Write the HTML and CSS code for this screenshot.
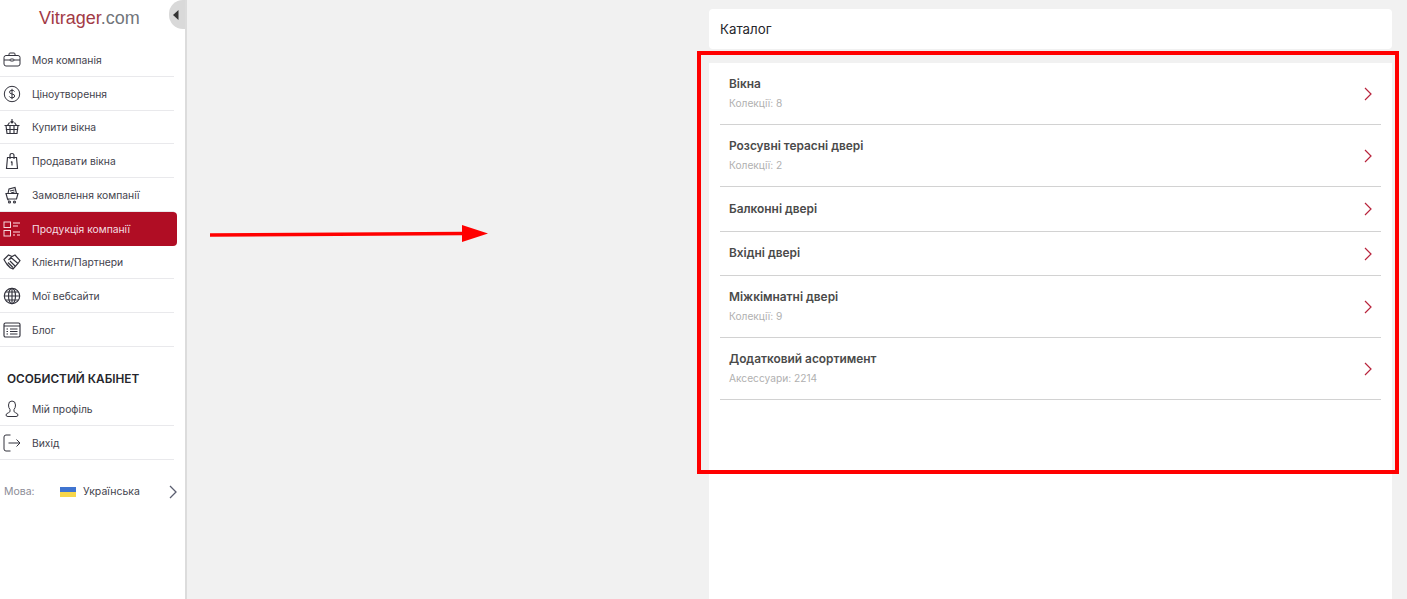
FILE: index.html
```html
<!DOCTYPE html>
<html lang="uk">
<head>
<meta charset="utf-8">
<title>Каталог</title>
<link rel="stylesheet" href="styles.css">
</head>
<body>
<div class="page">
  <aside class="sidebar">
    <div class="logo"><span class="logo-red">Vitrager</span>.com</div>
    <button class="collapse" aria-label="collapse"><svg width="6" height="10" viewBox="0 0 6 10"><path d="M5.5 0v10L0 5z" fill="#333"/></svg></button>
    <nav class="menu">
      <a class="item"><svg class="ico" viewBox="0 0 18 18"><rect x="1" y="4.500" width="16" height="10.500" rx="2"/><path d="M6 4.500V3q0-1 1-1h4q1 0 1 1v1.500M1 9h6M11 9h6"/><rect x="7" y="8" width="4" height="2" rx="1"/></svg><span>Моя компанія</span></a>
      <a class="item"><svg class="ico" viewBox="0 0 18 18"><circle cx="9" cy="9" r="7.700"/><path d="M11.500 6.500Q11 5.300 9 5.300 6.500 5.300 6.500 7.100 6.500 8.600 9 9q2.700.4 2.700 2 0 1.800-2.700 1.800-2.200 0-2.700-1.400M9 3.800v10.400"/></svg><span>Ціноутворення</span></a>
      <a class="item"><svg class="ico heavy" viewBox="0 0 18 18"><path d="M1.500 7.500h15M3 7.500l1 8h10l1-8M2.800 11.500h12.400M7 7.500v8M11 7.500v8M9 1v4M7.500 3.500 9 5l1.500-1.500M4.500 7.500 6.500 4.500M13.500 7.500l-2-3"/></svg><span>Купити вікна</span></a>
      <a class="item"><svg class="ico heavy" viewBox="0 0 18 18"><path d="M4.500 5.500h9l1 11H3.500zM7 7V3.500q0-2 2-2t2 2V7M9 9.500v4M8 10.500l1-1"/></svg><span>Продавати вікна</span></a>
      <a class="item"><svg class="ico heavy" viewBox="0 0 18 18"><path d="M3 7.500h12L13.500 13h-9zM4.500 13l1 1.500M5 7.500 6 3l6-1.500 1.500 6M7 5l4.500-1M8 7l3.500-1"/><circle cx="6.500" cy="16" r="1"/><circle cx="11.500" cy="16" r="1"/></svg><span>Замовлення компанії</span></a>
      <a class="item active"><svg class="ico" viewBox="0 0 18 18"><rect x="1" y="2" width="6.500" height="5.500"/><rect x="1" y="10.500" width="6.500" height="5.500"/><path class="thick" d="M10 3h7M10 6h5M10 12h7M10 15h2M14 15h3"/></svg><span>Продукція компанії</span></a>
      <a class="item"><svg class="ico heavy" viewBox="0 0 18 18"><path d="M1 6.500 5.500 2 9 3.500 12 2l5 5.500-2 3-5 5.500-2-1-1-.5-4-4.500zM5.500 7 9 3.500M7 6l1.500-1 6.500 5.500M5 9.500l5 5M3.500 11l4 4M7 8l5 5"/></svg><span>Клієнти/Партнери</span></a>
      <a class="item"><svg class="ico heavy" viewBox="0 0 18 18"><circle cx="9" cy="9" r="7.700"/><ellipse cx="9" cy="9" rx="3.500" ry="7.700"/><path d="M9 1.300v15.400M1.300 9h15.400M2.500 5h13M2.500 13h13"/></svg><span>Мої вебсайти</span></a>
      <a class="item"><svg class="ico heavy" viewBox="0 0 18 18"><rect x="1" y="2" width="16" height="14" rx="1.500"/><path d="M1 5h16M3.500 8H5M3.500 10.500H5M3.500 13H5M7 8h7.500M7 10.500h7.500M7 13h7.500"/></svg><span>Блог</span></a>
    </nav>
    <h2 class="section">ОСОБИСТИЙ КАБІНЕТ</h2>
    <nav class="menu">
      <a class="item"><svg class="ico" viewBox="0 0 18 18"><path d="M9 1q3.500 0 3.500 4 0 3-1.500 4.500v1.700q0 1 1.500 1.500 2.500 1 2.500 2.300 0 1.500-2 1.500H5q-2 0-2-1.500 0-1.300 2.500-2.300Q7 12.200 7 11.200V9.500Q5.500 8 5.500 5q0-4 3.500-4z"/></svg><span>Мій профіль</span></a>
      <a class="item"><svg class="ico" viewBox="0 0 18 18"><path d="M7.500 1H3Q1 1 1 3v12q0 2 2 2h4.500M5.500 9h11.500M13.500 5.500 17 9l-3.500 3.500"/></svg><span>Вихід</span></a>
    </nav>
    <div class="lang">
      <span class="lang-label">Мова:</span>
      <span class="flag"></span>
      <span class="lang-name">Українська</span>
      <svg class="lang-arrow" width="8" height="14" viewBox="0 0 8 14"><path d="M1 1l6 6-6 6"/></svg>
    </div>
  </aside>
  <main class="main">
    <section class="panel">
      <header class="panel-head">Каталог</header>
      <div class="catalog">
        <a class="row"><div class="row-text"><div class="row-title">Вікна</div><div class="row-sub">Колекції: 8</div></div><svg class="chev" viewBox="0 0 8 14"><path d="M1 1l6 6-6 6"/></svg></a>
        <a class="row"><div class="row-text"><div class="row-title">Розсувні терасні двері</div><div class="row-sub">Колекції: 2</div></div><svg class="chev" viewBox="0 0 8 14"><path d="M1 1l6 6-6 6"/></svg></a>
        <a class="row short"><div class="row-text"><div class="row-title">Балконні двері</div></div><svg class="chev" viewBox="0 0 8 14"><path d="M1 1l6 6-6 6"/></svg></a>
        <a class="row short tight"><div class="row-text"><div class="row-title">Вхідні двері</div></div><svg class="chev" viewBox="0 0 8 14"><path d="M1 1l6 6-6 6"/></svg></a>
        <a class="row"><div class="row-text"><div class="row-title">Міжкімнатні двері</div><div class="row-sub">Колекції: 9</div></div><svg class="chev" viewBox="0 0 8 14"><path d="M1 1l6 6-6 6"/></svg></a>
        <a class="row"><div class="row-text"><div class="row-title">Додатковий асортимент</div><div class="row-sub">Аксессуари: 2214</div></div><svg class="chev" viewBox="0 0 8 14"><path d="M1 1l6 6-6 6"/></svg></a>
      </div>
    </section>
  </main>
  <svg class="annot-arrow" width="280" height="20" viewBox="0 0 280 20"><path d="M0 11 254 9.500" stroke="#f00" stroke-width="3.500" fill="none"/><path d="M252 1l26 8.500-26 8.500z" fill="#f00"/></svg>
  <div class="annot-box"></div>
</div>
</body>
</html>
```

FILE: styles.css
```css
* { box-sizing: border-box; }
html, body { margin: 0; height: 100%; overflow: hidden; }
body { background: #f1f1f1; font-family: Inter, "Noto Sans", sans-serif; color: #3c3c44; }
.page { position: relative; display: flex; height: 599px; }
.sidebar { position: relative; width: 187px; flex: none; background: #fff; border-right: 2px solid #dcdcdc; }
.logo { height: 43px; padding: 8px 0 0 39px; font: 18px/21px "Liberation Sans", Arial, sans-serif; color: #71757a; }
.logo-red { color: #a23a46; }
.collapse { position: absolute; left: 169px; top: 0; width: 16px; height: 29px; padding: 0 0 0 4px; border: 0; border-radius: 14px 0 0 14px; background: #d9d9d9; display: flex; align-items: center; }
.menu { display: flex; flex-direction: column; }
.item { display: flex; align-items: center; height: 33.750px; width: 174px; border-bottom: 1px solid #e9e9ec; font-size: 10.300px; color: #43434d; padding: 1px 0 0 3px; }
.item span { margin-left: 11px; }
.ico { width: 18px; height: 18px; flex: none; fill: none; stroke: #33333d; stroke-width: 1; }
.ico.heavy { stroke-width: 1.150; }
.item.active { width: 177px; background: #b00d24; color: #f4dfe2; border-bottom: 0; border-radius: 0 4px 4px 0; }
.item.active .ico { stroke: #f3d8dc; }
.item.active .thick { stroke: #e79aa6; stroke-width: 1.400; }
.section { margin: 25px 0 5px 7px; font-size: 11.800px; line-height: 15px; font-weight: 600; color: #26262c; }
.section + .menu .item { height: 34px; }
.lang { display: flex; align-items: center; margin-top: 23px; padding-left: 4px; font-size: 10.500px; width: 177px; height: 18px; }
.lang-label { width: 56px; color: #8c8c96; }
.flag { width: 16px; height: 10px; background: linear-gradient(#3f74d0 50%, #f7d64a 50%); }
.lang-name { margin-left: 7px; color: #43434d; }
.lang-arrow { margin-left: auto; fill: none; stroke: #5a5e70; stroke-width: 1.300; }
.main { flex: 1; padding: 9px 15px 0 522px; min-width: 0; }
.panel { width: 683px; }
.panel-head { height: 40px; padding: 0 11px 1px; background: #fff; border-radius: 4px; display: flex; align-items: center; font-size: 13.300px; color: #26262c; }
.catalog { margin-top: 14px; background: #fff; height: 536px; padding: 0 11px; }
.row { display: flex; align-items: center; justify-content: space-between; height: 62px; padding: 0 9px; border-bottom: 1px solid #d2d2d2; }
.row.short { height: 45px; }
.row.tight { height: 44px; }
.row-text { margin-top: -2px; }
.row-title { font-size: 11.900px; line-height: 15px; font-weight: 600; color: #4a4a4a; }
.row-sub { margin-top: 5px; font-size: 10.200px; line-height: 14px; color: #b0b0b0; }
.chev { width: 8px; height: 14px; fill: none; stroke: #b8243c; stroke-width: 1.200; }
.annot-box { position: absolute; left: 697px; top: 51px; width: 702px; height: 423px; border: 4px solid #f00; }
.annot-arrow { position: absolute; left: 210px; top: 224px; }
```
